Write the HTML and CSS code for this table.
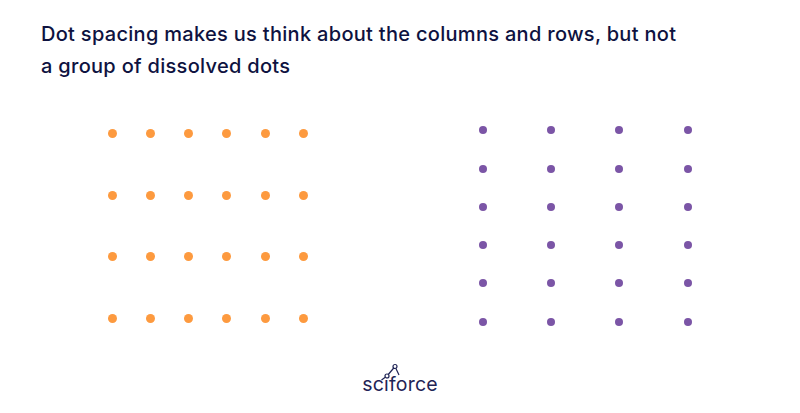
FILE: index.html
```html
<!DOCTYPE html>
<html lang="en">
<head>
<meta charset="utf-8">
<title>Dot spacing</title>
<link rel="stylesheet" href="styles.css">
</head>
<body>
<div class="page">
  <h1 class="title">Dot spacing makes us think about the columns and rows, but not<br>a group of dissolved dots</h1>
  <div class="figures">
    <div class="grid grid-orange">
      <span class="dot"></span><span class="dot"></span><span class="dot"></span><span class="dot"></span><span class="dot"></span><span class="dot"></span>
      <span class="dot"></span><span class="dot"></span><span class="dot"></span><span class="dot"></span><span class="dot"></span><span class="dot"></span>
      <span class="dot"></span><span class="dot"></span><span class="dot"></span><span class="dot"></span><span class="dot"></span><span class="dot"></span>
      <span class="dot"></span><span class="dot"></span><span class="dot"></span><span class="dot"></span><span class="dot"></span><span class="dot"></span>
    </div>
    <div class="grid grid-purple">
      <span class="dot"></span><span class="dot"></span><span class="dot"></span><span class="dot"></span>
      <span class="dot"></span><span class="dot"></span><span class="dot"></span><span class="dot"></span>
      <span class="dot"></span><span class="dot"></span><span class="dot"></span><span class="dot"></span>
      <span class="dot"></span><span class="dot"></span><span class="dot"></span><span class="dot"></span>
      <span class="dot"></span><span class="dot"></span><span class="dot"></span><span class="dot"></span>
      <span class="dot"></span><span class="dot"></span><span class="dot"></span><span class="dot"></span>
    </div>
  </div>
  <footer class="footer">
    <div class="logo">
      <span class="logo-text">sciforce</span>
      <svg class="logo-mark" width="28" height="20" viewBox="0 0 28 20" aria-hidden="true">
        <path d="M3.5 18 L9 14 L17 4.5 L21 13" fill="none" stroke="#1f2456" stroke-width="1.2" stroke-linejoin="round"/>
        <circle cx="9" cy="14" r="2" fill="#fff" stroke="#1f2456" stroke-width="1.2"/>
        <circle cx="17" cy="4.5" r="2" fill="#fff" stroke="#1f2456" stroke-width="1.2"/>
      </svg>
    </div>
  </footer>
</div>
</body>
</html>
```

FILE: styles.css
```css
* { box-sizing: border-box; }
html, body { margin: 0; padding: 0; background: #ffffff; }
body { width: 800px; height: 413px; overflow: hidden; font-family: Inter, "Noto Sans", sans-serif; }
.page { display: flex; flex-direction: column; height: 413px; }
.title {
  margin: 0;
  padding: 18px 0 0 41px;
  height: 82px;
  font-size: 20px;
  font-weight: 500;
  line-height: 32px;
  color: #0e1240;
  letter-spacing: 0.3px;
}
.figures { display: flex; align-items: flex-start; height: 280px; }
.grid { display: grid; }
.grid-orange {
  margin-left: 107.5px;
  margin-top: 47.2px;
  grid-template-columns: repeat(6, 9px);
  grid-auto-rows: 9px;
  column-gap: 29.33px;
  row-gap: 52.5px;
}
.grid-orange .dot { width: 9px; height: 9px; border-radius: 50%; background: #fd9a3f; }
.grid-purple {
  margin-left: 171.1px;
  margin-top: 44.3px;
  grid-template-columns: repeat(4, 8px);
  grid-auto-rows: 8px;
  column-gap: 60.1px;
  row-gap: 30.3px;
}
.grid-purple .dot { width: 8px; height: 8px; border-radius: 50%; background: #7b55a6; }
.footer { display: flex; justify-content: center; padding-top: 10px; }
.logo { position: relative; }
.logo-text { display: block; font-size: 19.5px; line-height: 24px; color: #1f2456; font-weight: 400; letter-spacing: 0.2px; }
.logo-mark { position: absolute; left: 16px; top: -10px; }
```
